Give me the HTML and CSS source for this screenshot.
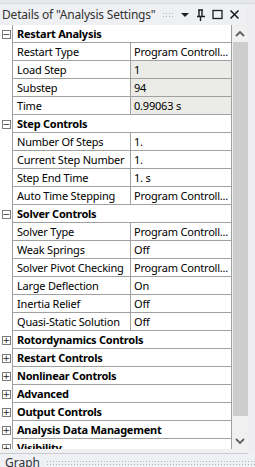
FILE: index.html
```html
<!DOCTYPE html>
<html>
<head>
<meta charset="utf-8">
<link rel="stylesheet" href="styles.css">
</head>
<body>
<div class="win">
  <div class="topstrip"></div>
  <div class="titlebar">
    <span class="title">Details of "Analysis Settings"</span>
    <span class="grip"></span>
    <svg class="ico" width="10" height="10" viewBox="0 0 10 10"><path d="M1 3 H9 L5 7 Z" fill="#1e1e1e"/></svg>
    <svg class="ico" width="10" height="12" viewBox="0 0 10 12"><path d="M3 1 V7 M6 1 V7 M2 1 H7 M1 7.5 H9 M4.5 8 V12" stroke="#1e1e1e" stroke-width="1.4" fill="none"/></svg>
    <svg class="ico" width="11" height="11" viewBox="0 0 11 11"><rect x="1" y="1.5" width="9" height="8" stroke="#1e1e1e" stroke-width="1.3" fill="none"/></svg>
    <svg class="ico" width="11" height="11" viewBox="0 0 11 11"><path d="M1.5 1.5 L9.5 9.5 M9.5 1.5 L1.5 9.5" stroke="#1e1e1e" stroke-width="1.6"/></svg>
  </div>
  <div class="main">
    <div class="grid">
      <div class="row cat"><span class="gut"><i class="box">−</i></span><span class="lab">Restart Analysis</span></div>
      <div class="row"><span class="gut"></span><span class="lab">Restart Type</span><span class="val">Program Controll...</span></div>
      <div class="row"><span class="gut"></span><span class="lab">Load Step</span><span class="val ro">1</span></div>
      <div class="row"><span class="gut"></span><span class="lab">Substep</span><span class="val ro">94</span></div>
      <div class="row"><span class="gut"></span><span class="lab">Time</span><span class="val ro">0.99063 s</span></div>
      <div class="row cat"><span class="gut"><i class="box">−</i></span><span class="lab">Step Controls</span></div>
      <div class="row"><span class="gut"></span><span class="lab">Number Of Steps</span><span class="val">1.</span></div>
      <div class="row"><span class="gut"></span><span class="lab">Current Step Number</span><span class="val">1.</span></div>
      <div class="row"><span class="gut"></span><span class="lab">Step End Time</span><span class="val">1. s</span></div>
      <div class="row"><span class="gut"></span><span class="lab">Auto Time Stepping</span><span class="val">Program Controll...</span></div>
      <div class="row cat"><span class="gut"><i class="box">−</i></span><span class="lab">Solver Controls</span></div>
      <div class="row"><span class="gut"></span><span class="lab">Solver Type</span><span class="val">Program Controll...</span></div>
      <div class="row"><span class="gut"></span><span class="lab">Weak Springs</span><span class="val">Off</span></div>
      <div class="row"><span class="gut"></span><span class="lab">Solver Pivot Checking</span><span class="val">Program Controll...</span></div>
      <div class="row"><span class="gut"></span><span class="lab">Large Deflection</span><span class="val">On</span></div>
      <div class="row"><span class="gut"></span><span class="lab">Inertia Relief</span><span class="val">Off</span></div>
      <div class="row"><span class="gut"></span><span class="lab">Quasi-Static Solution</span><span class="val">Off</span></div>
      <div class="row cat"><span class="gut"><i class="box">+</i></span><span class="lab">Rotordynamics Controls</span></div>
      <div class="row cat"><span class="gut"><i class="box">+</i></span><span class="lab">Restart Controls</span></div>
      <div class="row cat"><span class="gut"><i class="box">+</i></span><span class="lab">Nonlinear Controls</span></div>
      <div class="row cat"><span class="gut"><i class="box">+</i></span><span class="lab">Advanced</span></div>
      <div class="row cat"><span class="gut"><i class="box">+</i></span><span class="lab">Output Controls</span></div>
      <div class="row cat"><span class="gut"><i class="box">+</i></span><span class="lab">Analysis Data Management</span></div>
      <div class="row cat"><span class="gut"><i class="box">+</i></span><span class="lab">Visibility</span></div>
    </div>
    <div class="sbar">
      <svg class="arr" width="16" height="16" viewBox="0 0 16 16"><path d="M4 10 L8 6 L12 10" stroke="#606060" stroke-width="1.8" fill="none"/></svg>
      <div class="thumb"></div>
      <svg class="arr" width="16" height="16" viewBox="0 0 16 16"><path d="M4 6 L8 10 L12 6" stroke="#606060" stroke-width="1.8" fill="none"/></svg>
    </div>
  </div>
  <div class="gap"></div>
  <div class="bottom"><span class="tab">Graph</span><span class="grip2"></span></div>
</div>
</body>
</html>
```
FILE: styles.css
```css
html, body { margin: 0; padding: 0; }
body { width: 255px; height: 467px; overflow: hidden; background: #eeeef2; font-family: "Noto Sans", "Open Sans", sans-serif; font-size: 11px; color: #000; }
.win { display: flex; flex-direction: column; height: 467px; width: 255px; }
.topstrip { height: 3px; background: #e6e7eb; border-bottom: 1px solid #d8dbe1; flex: none; }
.titlebar { height: 21px; flex: none; display: flex; align-items: center; background: #eef0f3; padding-left: 2px; color: #333; width: 246px; box-sizing: border-box; }
.title { font-size: 12px; white-space: nowrap; letter-spacing: -0.2px; }
.grip { width: 22px; height: 5px; margin: 0 6px 0 6px; background-image: radial-gradient(circle, #b0b0b0 0.6px, transparent 0.8px); background-size: 3px 3px; background-position: 0 0; }
.ico { margin-right: 6px; flex: none; }
.main { display: flex; flex: none; height: 424px; width: 248px; background: #fff; }
.grid { width: 232px; border-right: 1px solid #a0a0a0; overflow: hidden; flex: none; box-sizing: border-box; }
.row { display: flex; height: 18px; box-sizing: border-box; }
.gut { width: 12px; flex: none; border-right: 1px solid #a0a0a0; box-sizing: content-box; display: flex; align-items: center; justify-content: center; }
.lab { width: 113px; flex: none; padding-left: 4px; border-bottom: 1px solid #a0a0a0; line-height: 17px; white-space: nowrap; overflow: hidden; letter-spacing: -0.2px; }
.val { flex: 1; padding-left: 3px; border-left: 1px solid #a0a0a0; border-bottom: 1px solid #a0a0a0; line-height: 17px; white-space: nowrap; overflow: hidden; letter-spacing: -0.2px; }
.val.ro { background: #ebebe7; }
.cat .lab { width: auto; flex: 1; font-weight: bold; font-size: 11px; letter-spacing: -0.25px; }
.box { font-style: normal; width: 7px; height: 7px; border: 1px solid #7a7a7a; font-size: 9px; line-height: 7px; text-align: center; color: #222; display: block; font-family: "DejaVu Sans", sans-serif; }
.sbar { width: 16px; flex: none; background: #f0f0f0; display: flex; flex-direction: column; align-items: center; }
.arr { flex: none; margin-top: 1px; }
.thumb { width: 15px; height: 374px; background: #cdcdcd; margin: 0 0 16px; }
.gap { height: 4px; background: #f0f0f0; width: 248px; border-bottom: 1px solid #c9ccd4; flex: none; }
.bottom { flex: 1; display: flex; align-items: center; background: #eef0f3; padding-left: 5px; color: #333; font-size: 12px; }
.grip2 { flex: 1; height: 5px; margin-left: 6px; background-image: radial-gradient(circle, #b0b0b0 0.6px, transparent 0.8px); background-size: 3px 3px; }
```
